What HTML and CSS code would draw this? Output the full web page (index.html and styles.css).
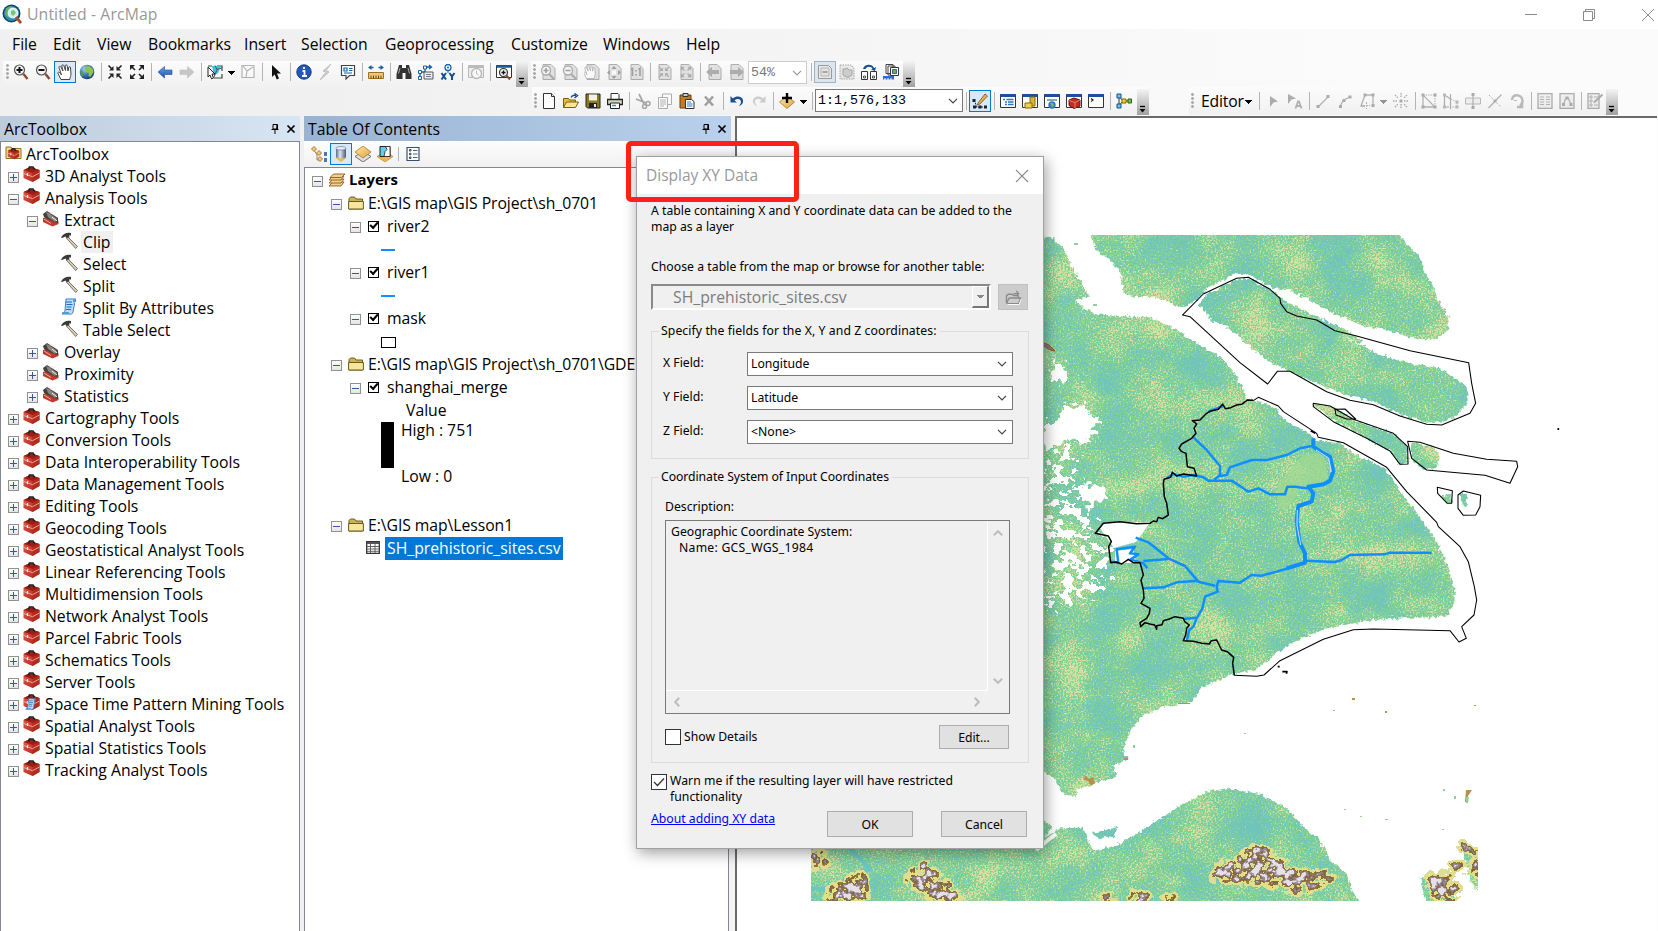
FILE: index.html
```html
<!DOCTYPE html>
<html lang="en">
<head>
<meta charset="utf-8">
<title>Untitled - ArcMap</title>
<link rel="stylesheet" href="styles.css">
</head>
<body>
<svg class="sprite" aria-hidden="true">
<defs>
<linearGradient id="gRed" x1="0" y1="0" x2="1" y2="1"><stop offset="0" stop-color="#e2604e"/><stop offset="1" stop-color="#a81f16"/></linearGradient>
<linearGradient id="gGold" x1="0" y1="0" x2="1" y2="1"><stop offset="0" stop-color="#ffe9a8"/><stop offset="1" stop-color="#dda23c"/></linearGradient>
<radialGradient id="gGlobe" cx=".35" cy=".3" r=".8"><stop offset="0" stop-color="#a8d4ff"/><stop offset=".5" stop-color="#3b78c4"/><stop offset="1" stop-color="#0d2f66"/></radialGradient>
<linearGradient id="gCyl"><stop offset="0" stop-color="#5a6b86"/><stop offset=".4" stop-color="#dfe7f2"/><stop offset="1" stop-color="#4b5a75"/></linearGradient>
<linearGradient id="gArr" x1="0" y1="0" x2="0" y2="1"><stop offset="0" stop-color="#6fa3ea"/><stop offset="1" stop-color="#1a4fb0"/></linearGradient>
</defs>
<symbol id="app" viewBox="0 0 20 21"><circle cx="9.500" cy="9.500" r="9" fill="#123f66"/><circle cx="9.500" cy="9.500" r="7.500" fill="#2a8fb8"/><path d="M4 4l5-2 3 3-3 2 1 4-3 3-4-3z" fill="#5db36b"/><circle cx="11" cy="9" r="4.800" fill="#cfeef5" stroke="#e9f6fa" stroke-width="1.200"/><path d="M9 7l3-1 2 3-3 3-2-2z" fill="#7cc46b"/><path d="M14 13l5 6" stroke="#a0522d" stroke-width="2.800"/></symbol>
<symbol id="zi" viewBox="0 0 16 16"><circle cx="6.500" cy="6" r="5" fill="#f4f4f4" stroke="#555" stroke-width="1.200"/><path d="M6.500 3v6M3.500 6h6" stroke="#111" stroke-width="2"/><path d="M10.500 10l4 5" stroke="#8b4a2f" stroke-width="2.400"/></symbol>
<symbol id="zo" viewBox="0 0 16 16"><circle cx="6.500" cy="6" r="5" fill="#f4f4f4" stroke="#555" stroke-width="1.200"/><path d="M3.500 6h6" stroke="#111" stroke-width="2"/><path d="M10.500 10l4 5" stroke="#8b4a2f" stroke-width="2.400"/></symbol>
<symbol id="hand" viewBox="0 0 16 16"><path d="M4 15.500L1 9.500C.5 8 2 7.500 3 9L4.500 11 2 3.500c-.3-1.500 1.500-1.500 2-.3L6 7 4.800 2c-.2-1.500 1.600-1.700 2-.3L8.500 6.500 8.200 1.800C8.200.5 10 .5 10.200 1.800L11 7l.7-3.500C12 2.300 13.600 2.500 13.500 4L14 10c0 2-1 3-1.200 5.500z" fill="#fff" stroke="#444" stroke-width="1"/></symbol>
<symbol id="globe" viewBox="0 0 16 16"><circle cx="8" cy="8" r="7.300" fill="url(#gGlobe)"/><path d="M6 3l4-1 4 3 .5 3-3 5-2-1 .3-3L7 8 5.500 5.500z" fill="#8fc34a"/><path d="M1.500 6l2 1 1 4-1 1.500A7 7 0 0 1 1.500 6z" fill="#5b9c3c"/></symbol>
<symbol id="fin" viewBox="0 0 16 16"><g fill="#222" stroke="#222" stroke-width="1.600"><path d="M1.500 1.500l3 3M14.500 1.500l-3 3M1.500 14.500l3-3M14.500 14.500l-3-3"/><path stroke="none" d="M6.500 2v4.500H2zM9.500 2v4.500H14zM6.500 14V9.500H2zM9.500 14V9.500H14z"/></g></symbol>
<symbol id="fout" viewBox="0 0 16 16"><g fill="#222" stroke="#222" stroke-width="1.600"><path d="M3 3l3 3M13 3l-3 3M3 13l3-3M13 13l-3-3"/><path stroke="none" d="M1 1h5L1 6zM15 1h-5l5 5zM1 15h5l-5-5zM15 15h-5l5-5z"/></g></symbol>
<symbol id="back" viewBox="0 0 16 16"><path d="M1 8l6.500-5.500V6H15v4.500H7.500V14z" fill="url(#gArr)" stroke="#1d4c9c" stroke-width=".6"/></symbol>
<symbol id="fwd" viewBox="0 0 16 16"><path d="M15 8L8.500 2.500V6H1v4.500h7.500V14z" fill="#777" stroke="#666" stroke-width=".6"/></symbol>
<symbol id="sel" viewBox="0 0 16 16"><path d="M1 2h4M10 2h5v5M15 10v4H7" fill="none" stroke="#444" stroke-width="1.200"/><path d="M5 2h9l-3 7-4 3z" fill="#35c5e2"/><path d="M8 1.500l2 4 5-1.500M10 5.500L7 13" fill="none" stroke="#555"/><path d="M1 3l7 7H5l1.500 4-2 .8L3 11 1 13z" fill="#fff" stroke="#222"/></symbol>
<symbol id="clear" viewBox="0 0 16 16"><path d="M2 1.500h12v12H2zM3 2l4 5 6-4M7 7l-1 6" fill="#fff" stroke="#444" stroke-width="1.200"/></symbol>
<symbol id="ptr" viewBox="0 0 16 16"><path d="M4 1l9 8.500H9l2 5-2.300 1-2-5L4 13z" fill="#111"/></symbol>
<symbol id="info" viewBox="0 0 16 16"><circle cx="8" cy="8" r="7.200" fill="#2458b8" stroke="#143a80"/><path d="M8 3v2M6.500 7H8.500v5M6 12h5" stroke="#fff" stroke-width="1.800" fill="none"/></symbol>
<symbol id="bolt" viewBox="0 0 16 16"><path d="M13 0L5 7l3 1-6 8 9-8-3-1.500z" fill="#999" stroke="#444" stroke-width=".8"/></symbol>
<symbol id="popup" viewBox="0 0 16 16"><path d="M1.500 1.500h13v10h-5L6 15v-3.500H1.500z" fill="#fff" stroke="#444" stroke-width="1.200"/><path d="M4 4h3v3H4zM9 4.500h3.500M9 6.500h3.500M4 9h8" stroke="#1560a8" fill="none" stroke-width="1.200"/></symbol>
<symbol id="meas" viewBox="0 0 16 16"><path d="M0 3.500L3.500 1v1.800h2v1.500h-2V6zM16 3.500L12.500 1v1.800h-2v1.500h2V6z" fill="#1560a8"/><path d="M.5 8.500h15v6H.5z" fill="#f0c878" stroke="#9c7020"/><path d="M3 11.500v3M5.500 11.500v3M8 11.500v3M10.500 11.500v3M13 11.500v3" stroke="#6b4a10"/></symbol>
<symbol id="bino" viewBox="0 0 16 16"><path d="M3 1h3v3h4V1h3l2.500 9v5H9.500V9h-3v6H.5v-5z" fill="#333"/><path d="M2.500 9.500L4 4M12 4l1.500 5.500" stroke="#aaa"/></symbol>
<symbol id="route" viewBox="0 0 16 16"><path d="M2 14V8h5V3h6M11 1l2.500 2L11 5" fill="none" stroke="#1560a8" stroke-width="1.300"/><path d="M.5 12.500h3v3h-3zM.5 6.500h3v3h-3zM5.500 2h3v3h-3z" fill="#fff" stroke="#1560a8"/><path d="M6 8h9v7H6z" fill="#e8eef5" stroke="#556"/><path d="M8 10.500h5M8 12.500h5" stroke="#778"/></symbol>
<symbol id="xy" viewBox="0 0 16 16"><circle cx="8" cy="3.500" r="3" fill="#fff" stroke="#1560a8" stroke-width="1.300"/><circle cx="8" cy="3.500" r="1" fill="#1560a8"/><path d="M8 6v3" stroke="#1560a8"/><path d="M1.500 9l4.500 6.500M6 9l-4.500 6.500M9.500 9l2.500 3.500L14.500 9M12 12v4" stroke="#12508c" stroke-width="2" fill="none"/></symbol>
<symbol id="time" viewBox="0 0 16 16"><path d="M.5 1.500h15v12H.5z" fill="#ddd" stroke="#555"/><path d="M.5 3h15" stroke="#555" stroke-width="2"/><circle cx="8.500" cy="9.500" r="5" fill="#fff" stroke="#555" stroke-width="1.400"/><path d="M8.500 6.500v3l2 1.500" stroke="#555" fill="none"/></symbol>
<symbol id="view" viewBox="0 0 16 16"><path d="M.5 1.500h15v12H.5z" fill="#fff" stroke="#333"/><path d="M.5 2.500h15" stroke="#1d55a8" stroke-width="2.500"/><circle cx="7.500" cy="8.500" r="4" fill="#eee" stroke="#333" stroke-width="1.200"/><path d="M7.500 6.500v4M5.500 8.500h4" stroke="#111" stroke-width="1.300"/><path d="M10.500 11.500l3.500 4" stroke="#8b4a2f" stroke-width="2"/></symbol>
<symbol id="page" viewBox="0 0 16 16"><path d="M3 .5h8l4 4v11H3z" fill="#bbb" stroke="#333"/></symbol>
<symbol id="pzi" viewBox="0 0 16 16"><use href="#page"/><circle cx="6" cy="6.500" r="4.500" fill="#eee" stroke="#333" stroke-width="1.400"/><path d="M6 4v5M3.500 6.500h5" stroke="#111" stroke-width="1.600"/><path d="M9 10l5 5" stroke="#333" stroke-width="2"/></symbol>
<symbol id="pzo" viewBox="0 0 16 16"><use href="#page"/><circle cx="6" cy="6.500" r="4.500" fill="#eee" stroke="#333" stroke-width="1.400"/><path d="M3.500 6.500h5" stroke="#111" stroke-width="1.600"/><path d="M9 10l5 5" stroke="#333" stroke-width="2"/></symbol>
<symbol id="phand" viewBox="0 0 16 16"><use href="#page"/><use href="#hand" x="-1" y="1" width="14" height="14"/></symbol>
<symbol id="pfull" viewBox="0 0 16 16"><use href="#page"/><path d="M8 2l2.500 3h-5zM8 15l2.500-3h-5zM1 8.500L4 6v5zM15 8.500L12 6v5z" fill="#111"/><path d="M6 6.500h4v4H6z" fill="#fff"/></symbol>
<symbol id="p11" viewBox="0 0 16 16"><use href="#page"/><path d="M3 5.500l1.500-1V12M10.500 5.500l1.500-1V12M8 6v1.500M8 10v1.500" stroke="#111" stroke-width="1.600" fill="none"/></symbol>
<symbol id="pfin" viewBox="0 0 16 16"><use href="#page"/><use href="#fin" x="2" y="2" width="12" height="12"/></symbol>
<symbol id="pfout" viewBox="0 0 16 16"><use href="#page"/><use href="#fout" x="2" y="2" width="12" height="12"/></symbol>
<symbol id="pback" viewBox="0 0 16 16"><use href="#page"/><path d="M0 8l6-5v3h7v4H6v3z" fill="#333"/></symbol>
<symbol id="pfwd" viewBox="0 0 16 16"><use href="#page"/><path d="M16 8l-6-5v3H2v4h8v3z" fill="#333"/></symbol>
<symbol id="draft" viewBox="0 0 16 16"><path d="M1.500 1.500h10l3 3v10h-13z" fill="#e8e8e8" stroke="#9a9a9a"/><path d="M4 4h8v8H4z" fill="#e2e2e2" stroke="#b4b4b4"/><path d="M5.500 8h5" stroke="#999" stroke-width="1.600"/></symbol>
<symbol id="focus" viewBox="0 0 16 16"><path d="M1 1h11l3 3v11H1z" fill="#ccc" stroke="#222" stroke-dasharray="1.500 1"/><path d="M4 5h2l2-1 2 2h3v5l-3 2H7l-3-2z" fill="#888" stroke="#222"/></symbol>
<symbol id="chg" viewBox="0 0 16 16"><path d="M2 5C3 0 11-1 13 4l2-1-1 4-4-1.500 1.500-.8C10 2 6 2 4.500 5z" fill="#16508e"/><path d="M.5 7.500h6v8h-6zM9.500 7.500h6v8h-6z" fill="#fff" stroke="#333"/><path d="M2.500 12h2v2h-2zM11.500 12h2v2h-2z" fill="#fff" stroke="#555"/></symbol>
<symbol id="ddp" viewBox="0 0 16 16"><path d="M3 .5h7v9H3zM5 2h7v9H5z" fill="#fff" stroke="#444"/><path d="M7.500 3.500h8v8h-8z" fill="#fff" stroke="#333"/><path d="M9.500 5.500h4v4h-4z" fill="#69b05c" stroke="#3b62a8"/><path d="M0 12h11v3.500H0z" fill="#2d6fd0"/><path d="M2 14v2M5 14v2M8 14v2" stroke="#fff"/></symbol>
<symbol id="new" viewBox="0 0 16 16"><path d="M2.500.5h8l3 3v12h-11z" fill="#fff" stroke="#333"/><path d="M10.500.5v3h3" fill="#dbe7f4" stroke="#333"/></symbol>
<symbol id="open" viewBox="0 0 16 16"><path d="M.5 14.500v-9h5l1 1.500h6v2" fill="#e8c040" stroke="#7a5b10"/><path d="M.5 14.500L3.500 9h12l-3 5.500z" fill="#ffe88c" stroke="#7a5b10"/><path d="M8 4.500C9 2 11 2 13 2.500M11.500.5l3 2-3 2.500" fill="none" stroke="#16508e" stroke-width="1.400"/></symbol>
<symbol id="save" viewBox="0 0 16 16"><path d="M1 1h14v14H2.500L1 13.500z" fill="#8a7a1e" stroke="#222"/><path d="M4 1.500h8v6H4z" fill="#f0f0e8"/><path d="M4 10h8v5H4z" fill="#222"/><path d="M9 11h2v3H9z" fill="#eee"/></symbol>
<symbol id="print" viewBox="0 0 16 16"><path d="M4 6V.5h7l1 1V6" fill="#fff" stroke="#333"/><path d="M.5 6.500h15v5H.5z" fill="#d8d4bc" stroke="#222" stroke-width="1.300"/><path d="M3.500 10h9v5.500h-9z" fill="#fff" stroke="#222"/><path d="M5 12.500h4" stroke="#2d8cd0" stroke-width="1.500"/></symbol>
<symbol id="cut" viewBox="0 0 16 16"><path d="M4 1l5 10M1 6l10 4" stroke="#222" stroke-width="1.700"/><circle cx="13" cy="10.500" r="2" fill="none" stroke="#222" stroke-width="1.500"/><circle cx="9.500" cy="13.500" r="2" fill="none" stroke="#222" stroke-width="1.500"/></symbol>
<symbol id="copy" viewBox="0 0 16 16"><path d="M5.500 1h9v10.500h-9z" fill="#fff" stroke="#333"/><path d="M1.500 4.500h9v11h-9z" fill="#fff" stroke="#333"/><path d="M3 7h6M3 9h6M3 11h6M3 13h4" stroke="#444"/></symbol>
<symbol id="paste" viewBox="0 0 16 16"><path d="M1 2h11v13H1z" fill="#c07a2c" stroke="#6b3c0c"/><path d="M4 .5h5v3H4z" fill="#ccc" stroke="#333"/><path d="M6.500 6.500h6l2.500 2v7H6.500z" fill="#fff" stroke="#333"/><path d="M8 9h4M8 11h5.500M8 13h5.500" stroke="#3176c0"/></symbol>
<symbol id="del" viewBox="0 0 16 16"><path d="M4 3.500l8 9M12 3.500l-8 9" stroke="#111" stroke-width="2.600"/></symbol>
<symbol id="undo" viewBox="0 0 16 16"><path d="M4 5.500C8 1.500 15 4 14 9c-.4 2-2 3.500-4 4 3-3 2.500-7-1-7-1.500 0-2.500.5-3.500 1.500L8 9.500H1.500V3z" fill="#17508f"/></symbol>
<symbol id="redo" viewBox="0 0 16 16"><path d="M12 5.500C8 1.500 1 4 2 9c.4 2 2 3.500 4 4-3-3-2.500-7 1-7 1.500 0 2.500.5 3.500 1.500L8 9.500h6.500V3z" fill="#888"/></symbol>
<symbol id="add" viewBox="0 0 16 16"><path d="M8 3l7.500 6L8 15.500.5 9z" fill="url(#gGold)" stroke="#a87820" stroke-width=".8"/><path d="M8 0v10M3 5h10" stroke="#000" stroke-width="2.400"/></symbol>
<symbol id="edt" viewBox="0 0 16 16"><path d="M2 7l3 7M2 7v1M3 14h9" stroke="#222" stroke-dasharray="2 1"/><path d="M.5 6h3v3h-3zM1 12.500h3v3H1zM6.500 12.500h3v3h-3zM12 12.500h3v3h-3z" fill="#222"/><path d="M6 10L13 1l2.500 2L8 11l-2.500 1z" fill="#e8b04c" stroke="#6b5030" stroke-width=".8"/></symbol>
<symbol id="win" viewBox="0 0 16 16"><path d="M.5 1.500h15v13H.5z" fill="#fff" stroke="#333"/><path d="M.5 2.500h15" stroke="#1d4f9e" stroke-width="3"/></symbol>
<symbol id="wtoc" viewBox="0 0 16 16"><use href="#win"/><path d="M3 6.500h2M6.500 6.500h7M5 9h2M8 9h5.500M5 11.500h2M8 11.500h5.500" stroke="#2674c8" stroke-width="1.300"/></symbol>
<symbol id="wcat" viewBox="0 0 16 16"><use href="#win"/><path d="M8 4h5v9H8z" fill="#d9b62c" stroke="#856a10"/><path d="M3 10h7v5H3z" fill="#f0cf50" stroke="#856a10"/></symbol>
<symbol id="wsea" viewBox="0 0 16 16"><use href="#win"/><path d="M3 7h10" stroke="#8aa" stroke-width="2"/><circle cx="8" cy="12" r="3.700" fill="#2f78c4"/><path d="M6 10l3 0 1 3-2 1z" fill="#84bf4c"/></symbol>
<symbol id="wbox" viewBox="0 0 16 16"><use href="#win"/><path d="M3 7l5-2 6 2v6l-6 2.500-5-3z" fill="#c12d20" stroke="#6d120c"/><path d="M3 7.500l6 2 5-2.500M9 9.500v5.500" stroke="#f0a090" fill="none" stroke-width=".7"/></symbol>
<symbol id="wpy" viewBox="0 0 16 16"><use href="#win"/><path d="M3 5.500l2 1.500-2 1.500" stroke="#111" fill="none" stroke-width="1.200"/></symbol>
<symbol id="model" viewBox="0 0 16 16"><path d="M3 3v10M3 3l4 5 6 0M3 13l4-5" stroke="#333" fill="none"/><path d="M1 1h4v4H1zM1 11h4v4H1z" fill="#6cc3f4" stroke="#12508c"/><path d="M6 6h4v4H6z" fill="#f2d22c" stroke="#806410"/><path d="M12 6h3.500v4H12z" fill="#6fc24c" stroke="#2b661a"/></symbol>
<symbol id="e1" viewBox="0 0 16 16"><path d="M5 3l8 5.500-4.500 1L5 14z" fill="#333"/></symbol>
<symbol id="e2" viewBox="0 0 16 16"><path d="M1 1l8 4.500-4.500 1L1 11z" fill="#333"/><path d="M8.500 15.500l2.500-7h1l2.500 7M9.500 13h4" stroke="#444" fill="none" stroke-width="1.800"/></symbol>
<symbol id="e3" viewBox="0 0 16 16"><path d="M3 14L13 4" stroke="#444" stroke-width="1.300"/><path d="M1.500 12h3v3h-3zM11.500 2h3v3h-3z" fill="#333"/></symbol>
<symbol id="e4" viewBox="0 0 16 16"><path d="M3.500 14C4 9 7 6 13 4" stroke="#444" fill="none" stroke-width="1.300"/><path d="M2 12h3v3H2zM5.500 6h3v3h-3zM11.500 2.500h3v3h-3z" fill="#333"/></symbol>
<symbol id="e5" viewBox="0 0 16 16"><path d="M14 13V2H6L2 13h4" stroke="#444" fill="none" stroke-width="1.300"/><path d="M4.500.5h3v3h-3zM12.500.5h3v3h-3zM12.500 11h3v3h-3z" fill="#333"/><path d="M7.500 9v7M4 12.500h7" stroke="#444" stroke-dasharray="2 1"/></symbol>
<symbol id="e6" viewBox="0 0 16 16"><path d="M8 0v5M8 11v5M0 8h5M11 8h5M2 2l3.500 3.500M14 2l-3.500 3.500M2 14l3.500-3.500M14 14l-3.500-3.500" stroke="#333" stroke-dasharray="1.500 1" stroke-width="1.400"/><path d="M6.500 6.500h3v3h-3z" fill="#333"/></symbol>
<symbol id="e7" viewBox="0 0 16 16"><path d="M2 2v12h12z" stroke="#444" fill="none" stroke-width="1.300"/><path d="M2 2h12v12" stroke="#444" fill="none" stroke-dasharray="1.500 1"/><path d="M.5.500h3v3h-3zM12.500 12.500h3v3h-3zM.5 12.500h3v3h-3zM12.500.5h3v3h-3z" fill="#333"/></symbol>
<symbol id="e8" viewBox="0 0 16 16"><path d="M1.500 2v12H6M1.500 2l6 4M7.500 1v15" stroke="#333" fill="none" stroke-width="1.200"/><path d="M8 6l6 3v5H9" stroke="#444" fill="none" stroke-dasharray="1.500 1"/><path d="M0 .5h3v3H0zM0 12.500h3v3H0zM12.500 7.500h3v3h-3zM12.500 12.500h3v3h-3z" fill="#555"/></symbol>
<symbol id="e9" viewBox="0 0 16 16"><path d="M.5 5h15v6H.5z" fill="#ddd" stroke="#555"/><path d="M8 1v14" stroke="#444" stroke-width="1.300"/><path d="M6.500 0h3v3h-3zM6.500 13h3v3h-3z" fill="#333"/></symbol>
<symbol id="e10" viewBox="0 0 16 16"><path d="M1.500 15L14.500 1.500" stroke="#444" stroke-width="1.300"/><path d="M2 2l12 12" stroke="#444" stroke-dasharray="2 1.500"/><path d="M6.500 6.500h3v3h-3z" fill="#333"/></symbol>
<symbol id="e11" viewBox="0 0 16 16"><path d="M3 7c0-7 10.500-6 10.500 1 0 2-1 3.500-2.500 4.500M13 9v5H8" stroke="#555" fill="none" stroke-width="2.500"/><path d="M5 7.500h3" stroke="#555"/></symbol>
<symbol id="e12" viewBox="0 0 16 16"><path d="M1 .5h14v15H1z" fill="#ddd" stroke="#333" stroke-width="1.300"/><path d="M3 4h4M9 4h4M3 6.500h4M9 6.500h4M3 9h4M9 9h4M3 11.500h4M9 11.500h4" stroke="#444"/></symbol>
<symbol id="e13" viewBox="0 0 16 16"><path d="M1 .5h14v15H1z" fill="#ddd" stroke="#333" stroke-width="1.300"/><path d="M4 12l3-7h2l3 6" stroke="#444" fill="none" stroke-width="1.300"/><path d="M3 10h3v3H3zM6.500 3.500h3v3h-3zM10.500 10h3v3h-3z" fill="#333"/></symbol>
<symbol id="e14" viewBox="0 0 16 16"><path d="M1 .5h11v15H1z" fill="#ddd" stroke="#333" stroke-width="1.300"/><path d="M3 3h2v2H3zM3 7h2v2H3zM3 11h2v2H3zM7 4h4M7 12h4" fill="none" stroke="#444"/><path d="M7 9.500L15.500 1.500" stroke="#333" stroke-width="2"/></symbol>
<symbol id="tb" viewBox="0 0 17 17"><path d="M.5 4L7 1l9.500 3v8L9.500 16 .5 12z" fill="url(#gRed)"/><path d="M.5 4L7 1l9.500 3-7 3z" fill="#9c1d14"/><path d="M9.500 7v9l7-4V4z" fill="#b32a1e"/><path d="M.5 7.500l9 3.200 7-3.700" fill="none" stroke="#f4b2a6" stroke-width=".9"/><path d="M5.500 3.500l1-2.500h3.500l1.500 2.500" fill="none" stroke="#222" stroke-width="1.700"/><path d="M4.500 7v3" stroke="#eee" stroke-width="1.300"/></symbol>
<symbol id="ts" viewBox="0 0 17 17"><path d="M1 8l6-2 9.500 5v3l-6 2.500L1 12z" fill="#c1392c"/><path d="M1 4l4-3 11 7v5l-4-1L2 7z" fill="#44403e"/><path d="M4 2l3 1 8 6-2 3-7-5z" fill="#8c8580"/><path d="M8 3l2-1 3 3M10 7l5 4" stroke="#eee" fill="none"/><path d="M2 9l7 4.500" stroke="#f3a99d"/></symbol>
<symbol id="hm" viewBox="0 0 17 17"><path d="M0 5.500C2 1.500 6 0 10 1l0 2.500-2 0 .5 2L6 7 4.500 4.500 1 6z" fill="#3a3a3a"/><path d="M7 5l9.500 9.500-1.800 2L5.800 6.500z" fill="#d9cdb5" stroke="#5b5347" stroke-width=".8"/></symbol>
<symbol id="scr" viewBox="0 0 17 17"><path d="M5 1h10c-2 1-2 3-1.500 5L12 14c-.5 2-2 2.500-4 2H1c2-1 3-2 3-4z" fill="#bcdcf6" stroke="#3b82c8"/><path d="M5 4h6M5.500 6.500h6M5.500 9h5M5 11.500h5" stroke="#2567b0"/><path d="M12 2c2-1.500 4 0 3 2h-3zM1 14h7v2H2z" fill="#4a9be0"/></symbol>
<symbol id="tbs" viewBox="0 0 17 17"><use href="#tb"/><use href="#scr" x="2" y="4" width="12" height="12"/></symbol>
<symbol id="atb" viewBox="0 0 17 17"><path d="M1 14.500V3h5l1 1.500h9v10z" fill="#f2dc7c" stroke="#8a7420"/><use href="#tb" x="2" y="4" width="13" height="12"/></symbol>
<symbol id="fold" viewBox="0 0 16 14"><path d="M1 13V2.500L2.500 1h4L8 3h6.500v10z" fill="#c9b354" stroke="#6b5c1e"/><path d="M.6 5.500h14.800V13H.6z" fill="#f6e79c" stroke="#6b5c1e"/></symbol>
<symbol id="lay" viewBox="0 0 18 14"><g fill="#f3cf8e" stroke="#8a5e20" stroke-width=".9"><path d="M1 13l4-4h11l-3 4z"/><path d="M1 10l4-4h11l-3 4z"/><path d="M1 7l4-4h11l-3 4z"/><path d="M2 4.500L5.500 1H17l-3.500 3.500z"/></g></symbol>
<symbol id="tbl" viewBox="0 0 14 13"><path d="M.7.7h12.600v11.600H.7z" fill="#fff" stroke="#333" stroke-width="1.300"/><path d="M1 2h12" stroke="#555" stroke-width="2"/><path d="M1 5.500h12M1 8h12M1 10.300h12M4.500 2v10M9 2v10" stroke="#555" stroke-width=".9"/></symbol>
<symbol id="t1" viewBox="0 0 16 16"><path d="M3 4l3 5v5h3M6 8h4" stroke="#888" fill="none"/><g fill="#f4c77a" stroke="#b07c28"><path d="M3 .5l2.500 2.500L3 5.500.5 3zM8 4.500l2.500 2.500L8 9.500 5.500 7zM9 10.500l2.500 2.500L9 15.500 6.500 13z"/></g><path d="M13 7h3M13 9h3M13 13h3M13 15h3" stroke="#16508e" stroke-width="1.300"/></symbol>
<symbol id="t2" viewBox="0 0 16 16"><path d="M8 16L2.500 12 8 8l5.500 4z" fill="#f0b850"/><path d="M3 2v9c2 2 8 2 10 0V2z" fill="url(#gCyl)"/><ellipse cx="8" cy="2.300" rx="5" ry="1.800" fill="#e8eef6" stroke="#5a6b86" stroke-width=".6"/></symbol>
<symbol id="t3" viewBox="0 0 16 16"><path d="M8 5l8 5.500L8 16 0 10.500z" fill="#ddd" stroke="#555" stroke-width=".8"/><path d="M8 0l8 6-8 6-8-6z" fill="url(#gGold)" stroke="#a87820" stroke-width=".8"/></symbol>
<symbol id="t4" viewBox="0 0 16 16"><path d="M8 6l8 4.500L8 16 0 10.500z" fill="#f0b850" stroke="#a87820" stroke-width=".6"/><path d="M3 .5h10v10H3z" fill="#5fd0e8" stroke="#222"/><path d="M8.500.5h4.500v10H7l1-5 2-2z" fill="#fff" stroke="#222" stroke-width=".8"/></symbol>
<symbol id="t5" viewBox="0 0 16 16"><path d="M2 1.500h12v13H2z" fill="#fff" stroke="#38506e" stroke-width="1.200"/><path d="M4.500 3.500h1.500v1.500H4.500zM4.500 7.300h1.500v1.500H4.500zM4.500 11h1.500v1.500H4.500z" fill="none" stroke="#444"/><path d="M8 4.500h4.500M8 8h4.500M8 11.500h4.500" stroke="#4a6080"/></symbol>
<symbol id="pin" viewBox="0 0 10 12"><path d="M3 1.500h4.500v4.500H3zM1.500 6.500h7M5 7v4M6.800 1.500v5" fill="none" stroke="#000"/></symbol>
<symbol id="cls" viewBox="0 0 10 10"><path d="M1.500 1.500l7 7M8.500 1.500l-7 7" stroke="#000" stroke-width="1.700"/></symbol>
<symbol id="ovf" viewBox="0 0 12 26"><path d="M3 17.500h5" stroke="#000" stroke-width="1.300"/><path d="M2.500 20h6l-3 3.500z" fill="#000"/></symbol>
<symbol id="chev" viewBox="0 0 10 6"><path d="M1 .8l4 4 4-4" fill="none" stroke="currentColor" stroke-width="1.200"/></symbol>
<symbol id="bchev" viewBox="0 0 10 6"><path d="M.8 .8l4.200 4 4.200-4" fill="none" stroke="currentColor" stroke-width="2"/></symbol>
</svg>

<header class="title"><svg class="app"><use href="#app"/></svg><span class="title-text">Untitled - ArcMap</span>
<svg class="winctl" viewBox="0 0 132 14"><g fill="none" stroke="#8a8a8a"><path d="M0 6.500h12M58.500 3.500h9v9h-9zM60.500 3.500v-2h9v9h-2M117 1l12 12M129 1l-12 12"/></g></svg></header>

<nav class="menu"><span class="m1">File</span><span class="m2">Edit</span><span class="m3">View</span><span class="m4">Bookmarks</span><span class="m5">Insert</span><span class="m6">Selection</span><span class="m7">Geoprocessing</span><span class="m8">Customize</span><span class="m9">Windows</span><span class="m10">Help</span></nav>

<div class="bars">
<div class="row r1">
<div class="tool t-tools">
<i class="grip"></i>
<b class="btn"><svg><use href="#zi"/></svg></b><b class="btn"><svg><use href="#zo"/></svg></b><b class="btn on"><svg><use href="#hand"/></svg></b><b class="btn"><svg><use href="#globe"/></svg></b><i class="sep"></i>
<b class="btn"><svg><use href="#fin"/></svg></b><b class="btn"><svg><use href="#fout"/></svg></b><i class="sep"></i>
<b class="btn"><svg><use href="#back"/></svg></b><b class="btn off"><svg><use href="#fwd"/></svg></b><i class="sep"></i>
<b class="btn"><svg><use href="#sel"/></svg></b><i class="dd"></i><b class="btn off"><svg><use href="#clear"/></svg></b><i class="sep"></i>
<b class="btn"><svg><use href="#ptr"/></svg></b><i class="sep"></i>
<b class="btn"><svg><use href="#info"/></svg></b><b class="btn off"><svg><use href="#bolt"/></svg></b><b class="btn"><svg><use href="#popup"/></svg></b><i class="sep"></i>
<b class="btn"><svg><use href="#meas"/></svg></b><i class="sep"></i>
<b class="btn"><svg><use href="#bino"/></svg></b><b class="btn"><svg><use href="#route"/></svg></b><b class="btn"><svg><use href="#xy"/></svg></b><i class="sep"></i>
<b class="btn off"><svg><use href="#time"/></svg></b><i class="sep"></i>
<b class="btn"><svg><use href="#view"/></svg></b>
<svg class="ovf"><use href="#ovf"/></svg>
</div>
<div class="tool t-layout">
<i class="grip"></i>
<b class="btn off"><svg><use href="#pzi"/></svg></b><b class="btn off"><svg><use href="#pzo"/></svg></b><b class="btn off"><svg><use href="#phand"/></svg></b><b class="btn off"><svg><use href="#pfull"/></svg></b><b class="btn off"><svg><use href="#p11"/></svg></b><i class="sep"></i>
<b class="btn off"><svg><use href="#pfin"/></svg></b><b class="btn off"><svg><use href="#pfout"/></svg></b><i class="sep"></i>
<b class="btn off"><svg><use href="#pback"/></svg></b><b class="btn off"><svg><use href="#pfwd"/></svg></b>
<div class="combo pct"><span>54%</span><svg class="chev"><use href="#chev"/></svg></div><i class="sep"></i>
<b class="btn dim"><svg><use href="#draft"/></svg></b><b class="btn off"><svg><use href="#focus"/></svg></b><b class="btn"><svg><use href="#chg"/></svg></b><b class="btn"><svg><use href="#ddp"/></svg></b>
<svg class="ovf"><use href="#ovf"/></svg>
</div>
</div>
<div class="row r2">
<div class="tool">
<i class="grip"></i>
<b class="btn"><svg><use href="#new"/></svg></b><b class="btn"><svg><use href="#open"/></svg></b><b class="btn"><svg><use href="#save"/></svg></b><b class="btn"><svg><use href="#print"/></svg></b><i class="sep"></i>
<b class="btn off"><svg><use href="#cut"/></svg></b><b class="btn off"><svg><use href="#copy"/></svg></b><b class="btn"><svg><use href="#paste"/></svg></b><b class="btn off"><svg><use href="#del"/></svg></b><i class="sep"></i>
<b class="btn"><svg><use href="#undo"/></svg></b><b class="btn off"><svg><use href="#redo"/></svg></b><i class="sep"></i>
<b class="btn"><svg><use href="#add"/></svg></b><i class="dd"></i><i class="sep"></i>
<div class="combo scale"><span>1:1,576,133</span><svg class="chev"><use href="#chev"/></svg></div><i class="sep"></i>
<b class="btn on"><svg><use href="#edt"/></svg></b><i class="sep"></i>
<b class="btn"><svg><use href="#wtoc"/></svg></b><b class="btn"><svg><use href="#wcat"/></svg></b><b class="btn"><svg><use href="#wsea"/></svg></b><b class="btn"><svg><use href="#wbox"/></svg></b><b class="btn"><svg><use href="#wpy"/></svg></b><i class="sep"></i>
<b class="btn"><svg><use href="#model"/></svg></b>
<svg class="ovf"><use href="#ovf"/></svg>
</div>
<div class="tool t-editor">
<i class="grip"></i><span class="ed">Editor</span><i class="dd"></i><i class="sep"></i>
<b class="btn off"><svg><use href="#e1"/></svg></b><b class="btn off"><svg><use href="#e2"/></svg></b><i class="sep"></i>
<b class="btn off"><svg><use href="#e3"/></svg></b><b class="btn off"><svg><use href="#e4"/></svg></b><b class="btn off"><svg><use href="#e5"/></svg></b><i class="dd gray"></i><b class="btn off"><svg><use href="#e6"/></svg></b><i class="sep"></i>
<b class="btn off"><svg><use href="#e7"/></svg></b><b class="btn off"><svg><use href="#e8"/></svg></b><b class="btn off"><svg><use href="#e9"/></svg></b><b class="btn off"><svg><use href="#e10"/></svg></b><b class="btn off"><svg><use href="#e11"/></svg></b><i class="sep"></i>
<b class="btn off"><svg><use href="#e12"/></svg></b><b class="btn off"><svg><use href="#e13"/></svg></b><i class="sep"></i>
<b class="btn off"><svg><use href="#e14"/></svg></b>
<svg class="ovf"><use href="#ovf"/></svg>
</div>
</div>
</div>

<main class="work">
<section class="pane toolbox">
<div class="head"><span>ArcToolbox</span><svg class="pin"><use href="#pin"/></svg><svg class="cls"><use href="#cls"/></svg></div>
<ul class="tree">
<li class="l0"><svg><use href="#atb"/></svg><span>ArcToolbox</span></li>
<li><i class="ex plus"></i><svg><use href="#tb"/></svg><span>3D Analyst Tools</span></li>
<li><i class="ex"></i><svg><use href="#tb"/></svg><span>Analysis Tools</span></li>
<li class="l2"><i class="ex"></i><svg><use href="#ts"/></svg><span>Extract</span></li>
<li class="l3"><svg><use href="#hm"/></svg><span class="hot">Clip</span></li>
<li class="l3"><svg><use href="#hm"/></svg><span>Select</span></li>
<li class="l3"><svg><use href="#hm"/></svg><span>Split</span></li>
<li class="l3"><svg><use href="#scr"/></svg><span>Split By Attributes</span></li>
<li class="l3"><svg><use href="#hm"/></svg><span>Table Select</span></li>
<li class="l2"><i class="ex plus"></i><svg><use href="#ts"/></svg><span>Overlay</span></li>
<li class="l2"><i class="ex plus"></i><svg><use href="#ts"/></svg><span>Proximity</span></li>
<li class="l2"><i class="ex plus"></i><svg><use href="#ts"/></svg><span>Statistics</span></li>
<li><i class="ex plus"></i><svg><use href="#tb"/></svg><span>Cartography Tools</span></li>
<li><i class="ex plus"></i><svg><use href="#tb"/></svg><span>Conversion Tools</span></li>
<li><i class="ex plus"></i><svg><use href="#tb"/></svg><span>Data Interoperability Tools</span></li>
<li><i class="ex plus"></i><svg><use href="#tb"/></svg><span>Data Management Tools</span></li>
<li><i class="ex plus"></i><svg><use href="#tb"/></svg><span>Editing Tools</span></li>
<li><i class="ex plus"></i><svg><use href="#tb"/></svg><span>Geocoding Tools</span></li>
<li><i class="ex plus"></i><svg><use href="#tb"/></svg><span>Geostatistical Analyst Tools</span></li>
<li><i class="ex plus"></i><svg><use href="#tb"/></svg><span>Linear Referencing Tools</span></li>
<li><i class="ex plus"></i><svg><use href="#tb"/></svg><span>Multidimension Tools</span></li>
<li><i class="ex plus"></i><svg><use href="#tb"/></svg><span>Network Analyst Tools</span></li>
<li><i class="ex plus"></i><svg><use href="#tb"/></svg><span>Parcel Fabric Tools</span></li>
<li><i class="ex plus"></i><svg><use href="#tb"/></svg><span>Schematics Tools</span></li>
<li><i class="ex plus"></i><svg><use href="#tb"/></svg><span>Server Tools</span></li>
<li><i class="ex plus"></i><svg><use href="#tbs"/></svg><span>Space Time Pattern Mining Tools</span></li>
<li><i class="ex plus"></i><svg><use href="#tb"/></svg><span>Spatial Analyst Tools</span></li>
<li><i class="ex plus"></i><svg><use href="#tb"/></svg><span>Spatial Statistics Tools</span></li>
<li><i class="ex plus"></i><svg><use href="#tb"/></svg><span>Tracking Analyst Tools</span></li>
</ul>
</section>

<section class="pane toc">
<div class="head"><span>Table Of Contents</span><svg class="pin"><use href="#pin"/></svg><svg class="cls"><use href="#cls"/></svg></div>
<div class="tocbar"><b class="btn"><svg><use href="#t1"/></svg></b><b class="btn on"><svg><use href="#t2"/></svg></b><b class="btn"><svg><use href="#t3"/></svg></b><b class="btn"><svg><use href="#t4"/></svg></b><i class="sep"></i><b class="btn"><svg><use href="#t5"/></svg></b></div>
<ul class="layers">
<li class="k0"><i class="ex"></i><svg class="lay"><use href="#lay"/></svg><strong>Layers</strong></li>
<li class="k1"><i class="ex"></i><svg><use href="#fold"/></svg><span>E:\GIS map\GIS Project\sh_0701</span></li>
<li class="k2"><i class="ex"></i><i class="chk"></i><span>river2</span></li>
<li class="k3"><i class="line"></i></li>
<li class="k2"><i class="ex"></i><i class="chk"></i><span>river1</span></li>
<li class="k3"><i class="line"></i></li>
<li class="k2"><i class="ex"></i><i class="chk"></i><span>mask</span></li>
<li class="k3"><i class="box"></i></li>
<li class="k1"><i class="ex"></i><svg><use href="#fold"/></svg><span>E:\GIS map\GIS Project\sh_0701\GDEM</span></li>
<li class="k2"><i class="ex"></i><i class="chk"></i><span>shanghai_merge</span></li>
<li class="k4"><span>Value</span></li>
<li class="ramp"><i></i><div><span>High : 751</span><span>Low : 0</span></div></li>
<li class="k1"><i class="ex"></i><svg><use href="#fold"/></svg><span>E:\GIS map\Lesson1</span></li>
<li class="k5"><svg><use href="#tbl"/></svg><span>SH_prehistoric_sites.csv</span></li>
</ul>
</section>

<section class="map">
<svg viewBox="737 118 920 813" width="920" height="813">
<defs>
<filter id="terrain" filterUnits="userSpaceOnUse" x="808" y="232" width="673" height="670" color-interpolation-filters="sRGB">
<feTurbulence type="fractalNoise" baseFrequency=".6" numOctaves="2" seed="4"/>
<feColorMatrix values="1 0 0 0 0 1 0 0 0 0 1 0 0 0 0 0 0 0 0 1" result="fine"/>
<feTurbulence type="fractalNoise" baseFrequency=".022 .026" numOctaves="5" seed="31"/>
<feColorMatrix values="1 0 0 0 0 1 0 0 0 0 1 0 0 0 0 0 0 0 0 1" result="coarse"/>
<feComposite in="fine" in2="coarse" operator="arithmetic" k2=".75" k3=".5" k4="-.145"/>
<feComponentTransfer result="tex">
<feFuncR type="discrete" tableValues=".44 .44 .44 .44 .44 .44 .44 .45 .48 .51 .54 .62 .74 .84 .88 .88 .88 .88 .88 .88"/>
<feFuncG type="discrete" tableValues=".77 .77 .77 .77 .77 .77 .77 .78 .8 .82 .83 .85 .87 .88 .88 .88 .88 .88 .88 .88"/>
<feFuncB type="discrete" tableValues=".74 .74 .74 .74 .74 .74 .73 .71 .66 .6 .57 .58 .62 .65 .64 .62 .6 .6 .6 .6"/>
<feFuncA type="linear" slope="0" intercept="1"/>
</feComponentTransfer>
<feTurbulence type="fractalNoise" baseFrequency=".25" numOctaves="2" seed="7" result="d"/>
<feDisplacementMap in="SourceAlpha" in2="d" scale="6" xChannelSelector="R" yChannelSelector="G" result="shape"/>
<feComposite in="tex" in2="shape" operator="in"/>
</filter>
<filter id="lakes" filterUnits="userSpaceOnUse" x="1035" y="300" width="200" height="360" color-interpolation-filters="sRGB">
<feTurbulence type="fractalNoise" baseFrequency=".11 .13" numOctaves="3" seed="21"/>
<feColorMatrix values="0 0 0 0 1 0 0 0 0 1 0 0 0 0 1 1 0 0 0 0" result="n"/>
<feGaussianBlur in="SourceAlpha" stdDeviation="11" result="b"/>
<feComposite in="n" in2="b" operator="arithmetic" k2="1" k3=".45" k4="-.42"/>
<feComponentTransfer><feFuncR type="linear" slope="0" intercept="1"/><feFuncG type="linear" slope="0" intercept="1"/><feFuncB type="linear" slope="0" intercept="1"/><feFuncA type="discrete" tableValues="0 0 0 0 0 0 0 0 0 0 0 1 1 1 1 1 1 1 1 1"/></feComponentTransfer>
</filter>
<filter id="rough" filterUnits="userSpaceOnUse" x="1035" y="300" width="200" height="360">
<feTurbulence type="fractalNoise" baseFrequency=".16" numOctaves="2" seed="3" result="d"/>
<feDisplacementMap in="SourceGraphic" in2="d" scale="16" xChannelSelector="R" yChannelSelector="G"/>
</filter>
<filter id="hills" filterUnits="userSpaceOnUse" x="811" y="320" width="667" height="581" color-interpolation-filters="sRGB">
<feTurbulence type="fractalNoise" baseFrequency=".13" numOctaves="3" seed="5"/>
<feColorMatrix values="0 0 0 0 0 0 0 0 0 0 0 0 0 0 0 1.700 0 0 0 -.35" result="n"/>
<feGaussianBlur in="SourceAlpha" stdDeviation="5" result="b"/>
<feComposite in="n" in2="b" operator="arithmetic" k1=".85" k3=".2"/>
<feColorMatrix values="0 0 0 1 0 0 0 0 1 0 0 0 0 1 0 0 0 0 1 0"/>
<feComponentTransfer>
<feFuncR type="discrete" tableValues="0 0 0 0 0 .85 .88 .89 .9 .6 .5 .52 .56 .6 .75 .9 .9 .9 .9 .9"/>
<feFuncG type="discrete" tableValues="0 0 0 0 0 .87 .87 .88 .88 .48 .39 .42 .5 .54 .7 .88 .88 .88 .88 .88"/>
<feFuncB type="discrete" tableValues="0 0 0 0 0 .6 .58 .52 .47 .25 .24 .32 .5 .6 .75 .9 .9 .9 .9 .9"/>
<feFuncA type="discrete" tableValues="0 0 0 0 0 1 1 1 1 1 1 1 1 1 1 1 1 1 1 1"/>
</feComponentTransfer>
</filter>
<clipPath id="extent"><path d="M811 235h667v666H811z"/></clipPath>
</defs>
<g clip-path="url(#extent)">
<g filter="url(#terrain)"><g transform="translate(1040 220) scale(.33333)">
<path d="M-60 48L40 55 75 90 95 140 125 190 147 230 105 240 130 265 170 283 240 288 330 292 410 330 470 370 540 410 585 460 610 510 615 530 650 545 700 560 740 605 790 630 830 660 900 670 950 705 1035 745 1085 820 1140 890 1190 965 1225 1040 1245 1110 1243 1150 1220 1190 1120 1193 1000 1200 860 1225 810 1245 735 1280 690 1315 640 1352 580 1360 540 1380 485 1400 455 1445 370 1460 300 1490 265 1545 250 1590 252 1605 268 1615 220 1640 228 1670 150 1695 110 1710 108 1727 70 1725 50 1680 10 1655 -60 1650z"/>
<path d="M143 30H1065L1110 80 1140 110 1150 150 1175 190 1195 240 1225 290 1225 330 1190 358 1130 358 1040 330 970 318 870 275 800 235 740 208 700 205 630 165 590 160 500 205 470 240 440 260 420 262 390 245 340 232 270 230 250 215 245 170 215 125 170 90z"/>
<path d="M475 255L500 225 590 178 630 176 690 208 730 240 830 290 930 335 970 365 960 372 900 345 960 375 1020 405 1090 425 1200 445 1260 485 1283 505 1283 550 1240 595 1180 610 1100 590 1000 545 900 520 830 490 750 455 690 425 630 380 560 320 520 305z"/>
<path d="M815 552L880 560 950 605 1060 640 1100 680 1103 725 1080 733 1050 695 980 655 880 600z"/>
<path d="M1110 665L1180 680 1200 710 1190 745 1150 750 1115 715z"/>
<path d="M1205 830l15-12 15 12v18h-15zM1258 822l22 0v38l-12-8z"/>
<path d="M-700 1780H-20L40 1820 10 1855 60 1825 130 1823 150 1880 175 1893 240 1870 330 1815 440 1745 500 1715 560 1705 660 1722 740 1765 780 1810 840 1860 870 1920 920 1960 935 2010 968 2060H-700z"/>
<path d="M155 1840l80-20-15 30-40 8zM1262 1870l22 0 30 40v100l-14-10-15-50zM1140 1970l60 10 40 20v60h-80z"/>
</g></g>
<g fill="#9fd892" opacity=".75"><path d="M1285 475l18-20 20-3 5 25-6 12-22 2-15 20-6-3-2-22z"/></g>
<g fill="none" stroke="#6cc7c4" stroke-width="4"><path d="M811 888l20 2 15-12 24-9-22-22"/></g>
<g fill="none" stroke="#fff" stroke-width="4"><path d="M1036 850l12-10 8-6"/></g>
<g filter="url(#lakes)"><path d="M1035 405h30l20 60 15 60 25 20-10 50-20 10-60 20z"/></g>
<g fill="#fff" filter="url(#rough)"><path d="M1051 378l4-14h9l2 18-8 1zM1046 430l10-8 8-16 20 0 14 12-6 20-10 6-14-4-18 10-5-4zM1078 490l6-6 20 2 1 12-16 12z"/></g>
<g fill="#fff"><path d="M1099 527l8-5h43l-8 12-6 8-22 6zM1115 551l18-2 3 12-6 2h-15z"/></g>
<g filter="url(#hills)"><path d="M1206 882l10-20 20-4 20-18 14 10 30 20 36 0 0 10-34 16-36-10-30-2zM809 850h18l4 17-22 5zM820 903l10-18 26-14 14 4 0 28zM903 878l20-22 12 14 20 16 12 17h-34l-30-22zM1124 890h24l6 10-2 6h-22zM1458 840h14v13h-14zM1472 850h12v32h-12zM1448 860h16v14h-16zM1422 872h24v8h14v23h-26zM1100 892h16v12h-16zM1162 893h16v12h-16z"/></g>
<g fill="#8f7090"><path d="M1042 342l7 3 6 6-5-1-8-5z" stroke="#8a5e2c"/></g>
<g fill="#b9904a"><path d="M1085 775l4 4 4-2 2 6-4 3-3-5-4-1zM1124 758h4v2h-4zM1178 703h12v1h-12zM1352 698h3v2h-3zM1385 711h2v2h-2zM1466 790h6l-4 6-1 6h-2zM1474 705h2v1h-2z"/></g>
<g fill="#8fd09a"><path d="M1333 710h2v1h-2zM1244 733h2v1h-2zM1443 789h2v2h-2zM1454 796h2v3h-2zM1344 809h2v1h-2zM1360 816h2v1h-2zM1385 819h3v1h-3zM1442 829h2v1h-2zM1133 745h2v3h-2zM1466 797h3l-1 6h-2zM1074 243h4v2h-4zM1093 304h4v2h-4z"/></g>
</g>
<g transform="translate(1040 220) scale(.33333)" fill="none" stroke-linejoin="round">
<g class="river">
<path d="M458 650L500 690 540 738V765L522 780"/>
<path d="M380 775L400 762 430 770 460 765 490 772 505 782H575L600 798 625 815 655 805 690 823H735L742 800H765L800 805 850 793"/>
<path d="M540 768L560 765 570 742 635 720H680L740 705 780 685 815 678"/>
<path class="wide" d="M820 655V680L850 700 870 710 880 755 870 782 850 793 805 800 820 820 815 845 775 858 770 900 778 965 795 1000V1028L740 1045"/>
<path d="M795 1030L710 1055 665 1067 635 1065 600 1088 535 1083 530 1100 533 1115 495 1130 487 1165 470 1195 460 1220 448 1230 440 1265"/>
<path d="M800 1022L885 1026 905 1020 930 1005 1035 1003 1050 998 1175 998"/>
<path d="M287 953L325 967 385 1015 435 1038 475 1085 525 1097"/>
<path d="M310 1105L370 1102 410 1087 475 1082M310 1023L385 1017M430 1197L470 1193"/>
<path d="M212 1025L235 1028 230 988 285 980 270 1000 295 1003 272 1018 310 1030 322 1045M505 575L550 558"/>
</g>
<path stroke="#cfe9ff" stroke-width="3" d="M828 690L866 714 874 755M772 870L771 915 782 975"/>
<g stroke="#000" stroke-width="3.200">
<path d="M428 285L450 290 600 428 683 492 712 454H750L860 515 930 541 1000 554 1080 588 1160 613 1205 615 1290 580 1307 550 1295 490 1286 428 1110 392 950 348 885 332 830 300 770 288 740 275 722 250 720 235 690 208 625 172 590 175 490 222z"/>
<path d="M820 550L870 558 940 598 1060 640 1103 680 1104 732 1080 733 1050 693 980 655 880 605 820 560zM885 568L915 567 947 597 920 597 888 585z"/>
<path d="M1103 664L1140 667 1240 700 1340 718 1430 724 1433 740 1410 790 1335 766 1160 750 1115 715z"/>
<path d="M1192 802L1237 812 1235 850 1222 850 1193 820zM1254 825L1270 813 1322 826 1320 860 1307 885 1270 886 1254 865z"/>
<path d="M640 542L655 532 715 558 730 575 830 640 835 652 910 668 1040 742 1100 815 1190 907 1195 920 1260 980 1285 1025 1303 1100 1310 1140 1302 1185 1265 1220 1279 1255 1257 1266 1230 1232 1000 1227 940 1229 850 1258 720 1322 672 1365 650 1369 583 1366"/>
<path d="M812 632l14 8M713 1340h6M727 1355l14 0-2 6M1555 624v6" stroke-width="5"/>
</g>
<g stroke="#000" stroke-width="4.500">
<path d="M583 1366L578 1330 581 1312 562 1295 545 1290 530 1260 514 1262 508 1272 485 1270 460 1264 430 1262 437 1245 440 1225 448 1215 434 1205 430 1195 405 1190 388 1197 370 1202 366 1214 350 1217 350 1228 344 1215 330 1212 315 1208 302 1220 300 1208 320 1195 328 1180 330 1165 303 1150 312 1135 310 1110 303 1080 310 1065 305 1045 300 1028 280 1028 265 1018 245 1032 228 1026 212 1028 206 980 214 965 205 948 166 940 190 910 240 905 290 911 330 910 340 903 350 905 355 892 368 896 385 885 380 850 373 830 370 790 372 778 392 772 397 757 410 768 430 762 470 768 462 745 442 740 438 700 424 694 417 685 425 672 455 655 468 640 462 625 470 612 457 602 480 600 500 580 510 574 535 568 548 552 556 566 572 563 590 555 605 553 622 540 640 541"/>
</g>
</g>
</svg>
</section>
</main>

<section class="dialog">
<div class="dtitle"><span>Display XY Data</span><svg viewBox="0 0 14 14"><path d="M1 1l12 12M13 1L1 13" stroke="#8a8a8a" stroke-width="1.100"/></svg></div>
<div class="dbody">
<p class="intro">A table containing X and Y coordinate data can be added to the<br>map as a layer</p>
<p class="choose">Choose a table from the map or browse for another table:</p>
<div class="pick"><div class="combo3"><span>SH_prehistoric_sites.csv</span><i></i></div><b class="browse"><svg viewBox="0 0 18 16"><path d="M1.500 14V6l2-1.500h4L9 6h5v2.500M1.500 14l3-5.500h12l-2 6H1.500M9 4h5M12 1l2.500 3L12 6.500" fill="none" stroke="#8a8a8a" stroke-width="1.400"/><path d="M2.500 15.500H15l2-5.500" fill="none" stroke="#fff"/></svg></b></div>
<fieldset class="g1"><legend>Specify the fields for the X, Y and Z coordinates:</legend>
<div class="field"><label>X Field:</label><div class="sel"><span>Longitude</span><svg class="chev"><use href="#chev"/></svg></div></div>
<div class="field"><label>Y Field:</label><div class="sel"><span>Latitude</span><svg class="chev"><use href="#chev"/></svg></div></div>
<div class="field"><label>Z Field:</label><div class="sel"><span>&lt;None&gt;</span><svg class="chev"><use href="#chev"/></svg></div></div>
</fieldset>
<fieldset class="g2"><legend>Coordinate System of Input Coordinates</legend>
<p class="desc">Description:</p>
<div class="area"><div class="txt">Geographic Coordinate System:<br><span>Name: GCS_WGS_1984</span></div>
<div class="vs"><svg class="up"><use href="#bchev"/></svg><svg><use href="#bchev"/></svg></div>
<div class="hs"><svg class="lf"><use href="#bchev"/></svg><svg class="rt"><use href="#bchev"/></svg></div></div>
<div class="line2"><i class="cb"></i><span>Show Details</span><b class="push edit">Edit...</b></div>
</fieldset>
<div class="warn"><i class="cb"><svg viewBox="0 0 14 14"><path d="M2 7l3.500 3.500L12 3.500" fill="none" stroke="#333" stroke-width="1.300"/></svg></i><span>Warn me if the resulting layer will have restricted<br>functionality</span></div>
<div class="foot"><a>About adding XY data</a><b class="push ok">OK</b><b class="push cancel">Cancel</b></div>
</div>
</section>
<div class="marker"></div>
</body>
</html>
```
FILE: styles.css
```css
* { box-sizing: border-box; }
html, body { margin: 0; width: 1658px; height: 931px; overflow: hidden; }
body {
  position: relative; display: flex; flex-direction: column;
  font: 15.750px/22px "Open Sans", "Noto Sans", sans-serif; color: #000;
  background: linear-gradient(90deg, #f0f0f0 0, #f0f0f0 300px, #fbfbfb 1400px);
}
ul { list-style: none; margin: 0; padding: 0; }
p { margin: 0; }
i { display: block; flex: none; }
svg { display: block; flex: none; }
.sprite { position: absolute; width: 0; height: 0; }

.title { height: 29px; flex: none; background: #fff; display: flex; align-items: center; padding-left: 2px; color: #999; }
.app { width: 20px; height: 21px; margin-right: 5px; }
.title-text { margin-top: -1px; letter-spacing: .12px; }
.winctl { width: 132px; height: 14px; margin-left: auto; margin-right: 1px; }

.menu { height: 32px; flex: none; display: flex; padding-left: 12px; line-height: 31px; white-space: nowrap; }
.menu span { flex: none; }
.m1 { width: 41px; } .m2 { width: 44px; } .m3 { width: 51px; } .m4 { width: 96px; } .m5 { width: 57px; }
.m6 { width: 84px; } .m7 { width: 126px; } .m8 { width: 92px; } .m9 { width: 83px; }

.bars { height: 55px; flex: none; }
.row { display: flex; padding-left: 3px; }
.r1 { height: 26px; }
.r2 { height: 29px; padding-left: 532px; }
.tool { display: flex; align-items: flex-start; background: linear-gradient(#fcfcfc, #f0f0f0); height: 26px; }
.r2 .tool { height: 28px; padding-top: 3px; }
.t-tools { padding-left: 1px; }
.t-layout { margin-left: 3px; }
.t-editor { margin-left: 40px; }
.grip { width: 6px; height: 16px; margin: 3px 0; background: radial-gradient(circle at 1.500px 1.500px, #aaa 1.300px, transparent 1.500px) 2px 0 / 10px 4px repeat-y; }
.btn { width: 22px; height: 22px; padding: 3px; flex: none; border: 0; }
.btn svg { width: 16px; height: 16px; }
.on { border: 1px solid #0078d7; background: #d9e8f6; padding: 2px; }
.dim { border: 1px solid #9db4c8; background: #dbe5ee; padding: 2px; }
.off svg { filter: grayscale(1) opacity(.38); }
.sep { width: 1px; height: 18px; margin: 2px 2px 0 3px; background: #b4b4b4; }
.dd { width: 11px; height: 22px; background: linear-gradient(#000, #000) 2px 10px / 7px 1px no-repeat, linear-gradient(#000, #000) 3px 11px / 5px 1px no-repeat, linear-gradient(#000, #000) 4px 12px / 3px 1px no-repeat, linear-gradient(#000, #000) 5px 13px / 1px 1px no-repeat; }
.dd.gray { opacity: .4; width: 12px; }
.ovf { width: 12px; height: 26px; margin-left: 2px; background: linear-gradient(#f4f4f4, #a0a0a0); }
.t-tools .ovf, .t-layout .ovf { margin-left: 1px; }
.t-editor .ovf { margin-left: 0; }
.r2 .ovf { margin-top: -1px; }
.ed { width: 50px; padding-left: 6px; line-height: 22px; letter-spacing: -.2px; }
.t-editor .dd:not(.gray) { margin-left: -2px; margin-right: 2px; }
.combo { height: 23px; border: 1px solid #7a7a7a; background: #fff; display: flex; align-items: center; justify-content: space-between; font: 13.330px/20px "Liberation Mono", monospace; padding: 0 4px 0 2px; }
.combo .chev { width: 10px; height: 6px; color: #444; }
.pct { width: 59px; border-color: #ccc; color: #777; margin: 0 1px; }
.pct .chev { color: #999; }
.scale { width: 148px; margin-top: -1px; }

.work { flex: 1; display: flex; min-height: 0; }
.pane { display: flex; flex-direction: column; flex: none; }
.toolbox { width: 300px; margin-right: 4px; }
.toc { width: 427px; margin-right: 5px; }
.head { height: 25px; flex: none; display: flex; align-items: center; padding: 0 4px; line-height: 26px; }
.toolbox .head { background: linear-gradient(90deg, #bdcbdb, #d8e5f3); }
.toc .head { background: linear-gradient(90deg, #99b3d2, #b9d1ec); }
.pin { width: 10px; height: 12px; margin-left: auto; margin-right: 6px; }
.cls { width: 10px; height: 10px; }
.tree { flex: 1; border: 1px solid #828790; border-bottom: 0; background: #fff; padding-top: 1px; }
.tree li { height: 22px; display: flex; align-items: center; padding-left: 7px; white-space: nowrap; }
.tree svg { width: 17px; height: 17px; margin: -3px 3px 0 4px; }
.tree span { padding: 0 2px; }
.tree .l0 { padding-left: 0; }
.tree .l0 svg { margin-right: 2px; }
.tree .l2 { padding-left: 26px; }
.tree .l3 { padding-left: 56px; }
.hot { background: #f0f0f0; }
.ex { width: 11px; height: 11px; border: 1px solid #919191; background: linear-gradient(#3a55a0, #3a55a0) 1px 4px / 7px 1px no-repeat, linear-gradient(#fff, #e4e4e4); margin-top: 2px; }
.plus { background: linear-gradient(#3a55a0, #3a55a0) 1px 4px / 7px 1px no-repeat, linear-gradient(#3a55a0, #3a55a0) 4px 1px / 1px 7px no-repeat, linear-gradient(#fff, #e4e4e4); }

.tocbar { height: 26px; flex: none; display: flex; padding: 2px 4px; background: linear-gradient(#fdfdfd, #f0f0f0); }
.tocbar .sep { margin: 4px 3px 0 2px; height: 14px; }
.layers { flex: 1; width: 425px; border: 1px solid #828790; border-width: 1px 1px 0; background: #fff; padding-top: 1px; overflow: hidden; }
.layers li { height: 23px; display: flex; align-items: center; white-space: nowrap; }
.layers svg { width: 16px; height: 14px; margin: -2px 4px 0 6px; }
.layers svg.lay { width: 18px; margin: -2px 3px 0 5px; }
.layers span, .layers strong { margin-top: -2px; }
.k0 { padding-left: 7px; } .k1 { padding-left: 26px; } .k2 { padding-left: 45px; }
.k1 span { letter-spacing: -.06px; }
.k0 strong { font-size: 14.900px; margin-top: -4px; }
.chk { width: 11px; height: 11px; border: 1.500px solid #000; margin: 0 8px 0 7px; position: relative; }
.chk::after { content: ""; position: absolute; left: 1px; top: 0; width: 6px; height: 3px; border: solid #000; border-width: 0 0 2px 2px; transform: rotate(-48deg); }
.k3 { padding-left: 76px; }
.line { width: 14px; height: 2px; background: #0f8fff; margin-top: 1px; }
.box { width: 15px; height: 11px; border: 1px solid #000; margin-top: 2px; }
.k4 { padding-left: 101px; }
.layers .ramp { height: 92px; padding-left: 76px; align-items: flex-start; }
.ramp i { width: 13px; height: 46px; background: #000; }
.ramp div { display: flex; flex-direction: column; padding-left: 7px; gap: 26px; margin-top: -1px; }
.layers .ramp span { line-height: 22px; }
.k5 { padding-left: 55px; }
.layers .k5 svg { width: 14px; height: 13px; margin-right: 5px; }
.k5 span { background: #0078d7; color: #fff; padding: 0 2px; line-height: 23px; }
.layers .k5 span { margin-top: 0; }

.map { width: 922px; flex: none; border: solid #6a6a6a; border-width: 2px 0 0 2px; background: #fff; margin-left: -1px; }
.river { stroke: #0f8fff; stroke-width: 7.500; }
.wide { stroke-width: 12; }

.dialog { position: absolute; left: 636px; top: 156px; width: 408px; height: 693px; background: #f0f0f0; border: 1px solid #a0a0a0; box-shadow: 2px 4px 14px rgba(0, 0, 0, .38); font: 12.220px/16px "Noto Sans", sans-serif; }
.dtitle { height: 37px; background: #fff; display: flex; align-items: center; justify-content: space-between; padding: 0 14px 0 9px; color: #999; font: 15.500px/22px "Open Sans", sans-serif; }
.dtitle span { margin-top: -2px; }
.dtitle svg { width: 14px; height: 14px; }
.dbody { padding: 9px 15px 0 14px; white-space: nowrap; }
.choose { margin-top: 24px; letter-spacing: .04px; }
.pick { display: flex; justify-content: space-between; margin-top: 9px; }
.combo3 { width: 340px; height: 26px; border: 2px solid #8a8a8a; border-right-color: #fff; border-bottom-color: #fff; display: flex; justify-content: space-between; padding-left: 20px; font: 15.750px/22px "Open Sans", sans-serif; color: #7c7c7c; }
.combo3 i { width: 17px; border: solid; border-color: #fff #777 #777 #fff; border-width: 1px 2px 2px 1px; background: linear-gradient(#888, #888) 4px 8px / 7px 1px no-repeat, linear-gradient(#888, #888) 5px 9px / 5px 1px no-repeat, linear-gradient(#888, #888) 6px 10px / 3px 1px no-repeat; }
.browse { width: 30px; height: 26px; background: #ccc; border: 1px solid #c0c0c0; padding: 5px 6px; }
.browse svg { width: 17px; height: 15px; }
fieldset { border: 1px solid #dcdcdc; margin: 0 -1px 0 0; padding: 0 13px 0 11px; }
legend { padding: 0 3px 0 2px; margin-left: -4px; }
.g1 { margin-top: 13px; height: 136px; }
.g1 legend { letter-spacing: .08px; }
.g1 .field:nth-of-type(1) { margin-top: 13px; }
.field { display: flex; justify-content: space-between; margin-bottom: 10px; padding-right: 2px; }
.field label { padding-top: 3px; }
.sel { width: 266px; height: 24px; border: 1px solid #7a7a7a; background: #fff; display: flex; align-items: center; justify-content: space-between; padding: 0 5px 0 3px; }
.sel .chev { width: 10px; height: 6px; color: #444; }
.g2 { margin-top: 10px; height: 294px; }
.g2 legend { letter-spacing: -.06px; }
.desc { margin: 14px 0 5px 2px; }
.area { margin-left: 2px; width: 345px; height: 194px; border: 1px solid #7a7a7a; display: grid; grid-template: 170px 22px / 322px 21px; }
.txt { border: solid #fff; border-width: 0 1px 1px 0; padding: 3px 5px; }
.txt span { padding-left: 8px; letter-spacing: .25px; }
.vs { color: #bdbdbd; display: flex; flex-direction: column; justify-content: space-between; align-items: center; padding: 9px 1px 7px 0; }
.vs svg, .hs svg { width: 10px; height: 6px; }
.up { transform: rotate(180deg); }
.hs { color: #bdbdbd; display: flex; justify-content: space-between; align-items: center; padding: 0 6px; }
.lf { transform: rotate(90deg); } .rt { transform: rotate(-90deg); }
.line2 { display: flex; align-items: center; margin: 11px 6px 0 2px; }
.cb { width: 16px; height: 16px; border: 1px solid #333; background: #fff; margin-right: 3px; }
.cb svg { width: 14px; height: 14px; }
.push { font-weight: normal; background: #e1e1e1; border: 1px solid #adadad; text-align: center; display: block; }
.edit { width: 70px; height: 24px; line-height: 23px; margin-left: auto; }
.warn { display: flex; margin-top: 10px; letter-spacing: .04px; }
.warn .cb { margin-top: 1px; }
.foot { display: flex; align-items: flex-start; margin-top: 4px; }
.foot a { color: #00f; text-decoration: underline; width: 176px; margin-top: 2px; }
.foot .push { width: 86px; height: 26px; line-height: 25px; margin-top: 2px; }
.cancel { margin-left: 28px; }

.marker { position: absolute; left: 626px; top: 141px; width: 173px; height: 61px; border: 5px solid #ff2016; border-radius: 5px; }
```
